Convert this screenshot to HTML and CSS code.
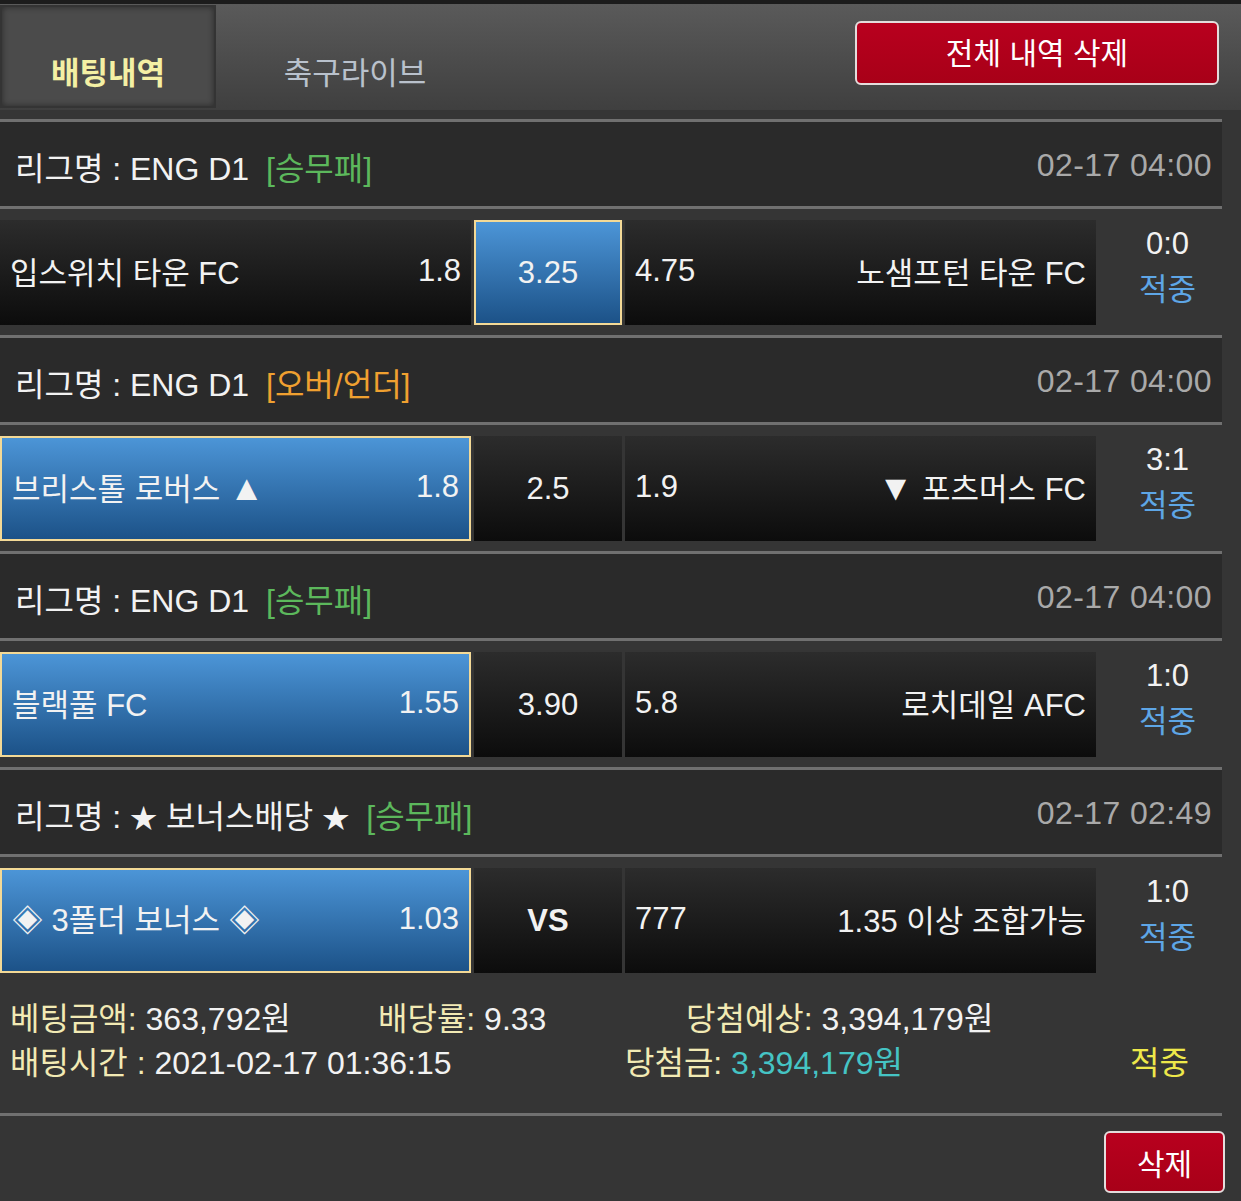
FILE: index.html
```html
<!DOCTYPE html>
<html lang="ko">
<head>
  <meta charset="UTF-8" />
  <title>배팅내역</title>
  <meta name="viewport" content="width=device-width, initial-scale=1" />
  <link rel="stylesheet" href="styles.css">
</head>
<body>
  <div id="tabs">
    <div class="tab active">배팅내역</div>
    <div class="tab">축구라이브</div>
    <button class="btn-red btn-all">전체 내역 삭제</button>
  </div>

  <div id="bet-list">
    <div class="league">
      <span>리그명 : ENG D1 <span class="kind green">[승무패]</span></span>
      <span class="date">02-17 04:00</span>
    </div>
    <div class="match">
      <div class="cell side"><span>입스위치 타운 FC</span><span>1.8</span></div>
      <div class="cell draw picked">3.25</div>
      <div class="cell side"><span>4.75</span><span>노샘프턴 타운 FC</span></div>
      <div class="result"><span>0:0</span><span class="hit">적중</span></div>
    </div>

    <div class="league">
      <span>리그명 : ENG D1 <span class="kind orange">[오버/언더]</span></span>
      <span class="date">02-17 04:00</span>
    </div>
    <div class="match">
      <div class="cell side picked"><span>브리스톨 로버스 <span class="tri">▲</span></span><span>1.8</span></div>
      <div class="cell draw">2.5</div>
      <div class="cell side"><span>1.9</span><span><span class="tri">▼</span> 포츠머스 FC</span></div>
      <div class="result"><span>3:1</span><span class="hit">적중</span></div>
    </div>

    <div class="league">
      <span>리그명 : ENG D1 <span class="kind green">[승무패]</span></span>
      <span class="date">02-17 04:00</span>
    </div>
    <div class="match">
      <div class="cell side picked"><span>블랙풀 FC</span><span>1.55</span></div>
      <div class="cell draw">3.90</div>
      <div class="cell side"><span>5.8</span><span>로치데일 AFC</span></div>
      <div class="result"><span>1:0</span><span class="hit">적중</span></div>
    </div>

    <div class="league">
      <span>리그명 : <span class="star">★</span> 보너스배당 <span class="star">★</span> <span class="kind green">[승무패]</span></span>
      <span class="date">02-17 02:49</span>
    </div>
    <div class="match last">
      <div class="cell side picked"><span>◈ 3폴더 보너스 ◈</span><span>1.03</span></div>
      <div class="cell draw vs">VS</div>
      <div class="cell side"><span>777</span><span>1.35 이상 조합가능</span></div>
      <div class="result"><span>1:0</span><span class="hit">적중</span></div>
    </div>

    <div class="summary">
      <div class="sum-row first">
        <span class="c1"><span class="lbl">베팅금액:</span> 363,792원</span>
        <span class="c2"><span class="lbl">배당률:</span> 9.33</span>
        <span class="c3"><span class="lbl">당첨예상:</span> 3,394,179원</span>
      </div>
      <div class="sum-row second">
        <span class="c1"><span class="lbl">배팅시간 :</span> 2021-02-17 01:36:15</span>
        <span class="c2"><span class="lbl">당첨금:</span> <span class="teal">3,394,179원</span></span>
        <span class="c3 yellow">적중</span>
      </div>
    </div>
  </div>

  <div id="footer">
    <button class="btn-red btn-one">삭제</button>
  </div>
</body>
</html>
```

FILE: styles.css
```css
* { box-sizing: border-box; }
body {
  margin: 0;
  background: #353535;
  color: #f2f2f2;
  font-family: "Liberation Sans", "Noto Sans CJK KR", sans-serif;
  font-size: 31px;
}

#tabs {
  display: flex;
  align-items: flex-start;
  height: 110px;
  border-top: 4px solid #1c1c1c;
  background: linear-gradient(#5a5a5a, #3f3f3f);
}
.tab {
  height: 104px;
  padding: 28px 0 0;
  display: flex;
  align-items: center;
  justify-content: center;
  font-size: 31px;
  color: #b9c1cc;
}
.tab:first-child { width: 216px; }
.tab:nth-child(2) { width: 278px; }
.tab.active {
  margin-top: 1px;
  height: 103px;
  background: #4b4b4b;
  border: 2px solid #343434;
  box-shadow: inset 0 0 6px rgba(0,0,0,0.45);
  color: #f4f0a4;
  font-weight: 700;
}

.btn-red {
  font-family: inherit;
  color: #fff;
  background: linear-gradient(#b8001e, #a80018);
  border: 2px solid #e4dcdc;
  border-radius: 6px;
  cursor: pointer;
}
.btn-all {
  margin: 17px 22px 0 auto;
  padding-bottom: 5px;
  width: 364px;
  height: 64px;
  font-size: 30px;
}

#bet-list {
  width: 1222px;
  margin-top: 9px;
}

.league {
  display: flex;
  justify-content: space-between;
  align-items: center;
  height: 87px;
  padding: 3px 10px 0 15px;
  background: #2a2a2a;
  border-top: 3px solid #707070;
  font-size: 32px;
}
.kind { margin-left: 8px; }
.star { font-size: 0.85em; }
.green { color: #5cb85c; }
.orange { color: #f0a030; }
.date { color: #a9a9a9; letter-spacing: 0.4px; }

.match {
  display: flex;
  gap: 3px;
  padding: 11px 0 10px;
  border-top: 3px solid #707070;
}
.match.last { padding-bottom: 0; }
.cell {
  display: flex;
  align-items: center;
  justify-content: space-between;
  height: 105px;
  padding: 0 10px 4px;
  background: linear-gradient(#2c2c2c, #0c0c0c);
}
.side { width: 471px; }
.draw {
  width: 148px;
  justify-content: center;
  padding-top: 4px;
}
.vs { font-weight: 700; }
.tri { font-size: 1.15em; line-height: 1; }
.picked {
  background: linear-gradient(#4c95d7, #1c5288);
  border: 2px solid #f3d996;
}
.result {
  flex: 1;
  display: flex;
  flex-direction: column;
  align-items: center;
  justify-content: center;
  padding: 0 0 12px 14px;
  line-height: 46px;
}
.hit { color: #5ea6e6; }

.summary {
  padding: 24px 0 28px 10px;
  border-bottom: 3px solid #707070;
  line-height: 44px;
  font-size: 32px;
}
.sum-row { display: flex; }
.lbl { color: #f2eab4; }
.first .c1 { width: 368px; }
.first .c2 { width: 308px; }
.second .c1 { width: 615px; }
.second .c2 { width: 505px; }
.teal { color: #45c4c4; }
.yellow { color: #eee84a; }

#footer {
  display: flex;
  justify-content: flex-end;
  padding: 15px 16px 0 0;
}
.btn-one {
  width: 121px;
  height: 62px;
  font-size: 30px;
}
```
